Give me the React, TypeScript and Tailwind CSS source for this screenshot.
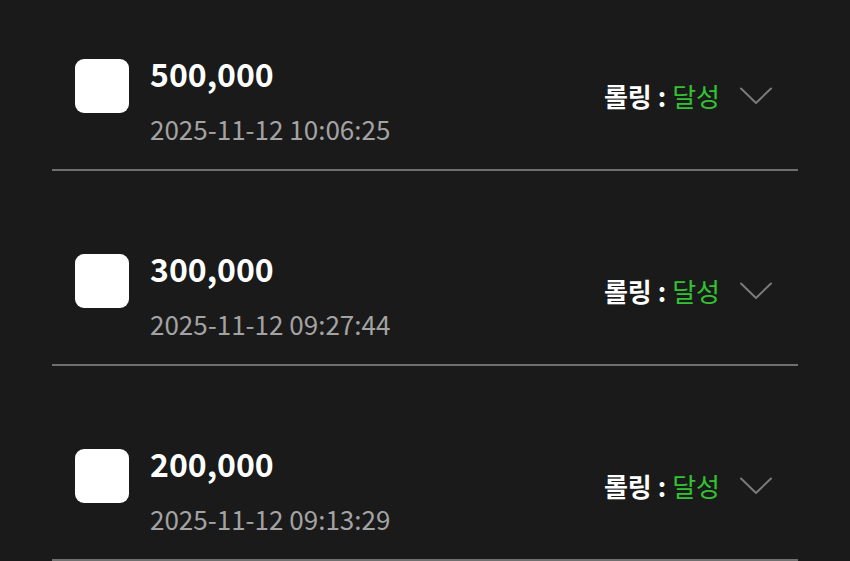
import React from "react";

const items = [
    { amount: "500,000", date: "2025-11-12 10:06:25" },
    { amount: "300,000", date: "2025-11-12 09:27:44" },
    { amount: "200,000", date: "2025-11-12 09:13:29" },
];

function Chevron() {
    return (
        <svg width="32" height="18" viewBox="0 0 32 18" fill="none">
            <path
                d="M1 1.5 L16 16 L31 1.5"
                stroke="#7a7a7a"
                strokeWidth="2"
                strokeLinecap="round"
                strokeLinejoin="round"
            />
        </svg>
    );
}

export default function App() {
    return (
        <div
            className="w-[850px] h-[561px] overflow-hidden bg-[#1a1a1a] px-[52px]"
            style={{ fontFamily: '"Noto Sans CJK KR", "Noto Sans", sans-serif' }}
        >
            <div className="mt-[-24px]">
                {items.map((item) => (
                    <div
                        key={item.date}
                        className="h-[195px] flex items-start pt-[83px] pl-[23px] pr-[26px] border-b-2 border-[#6f6f6f] box-border"
                    >
                        <div className="w-[54px] h-[54px] rounded-[9px] bg-white shrink-0" />
                        <div className="ml-[21px] flex flex-col">
                            <span className="text-[32px] leading-[28px] font-bold text-white">
                                {item.amount}
                            </span>
                            <span className="mt-[27px] text-[26px] leading-[30px] text-[#a3a3a3]">
                                {item.date}
                            </span>
                        </div>
                        <div className="ml-auto mt-[22px] flex items-center">
                            <span className="text-[26px] leading-[30px] font-bold text-white">
                                롤링 :
                            </span>
                            <span className="ml-[6px] text-[26px] leading-[30px] text-[#33c233]">
                                달성
                            </span>
                            <span className="ml-[20px] flex items-center">
                                <Chevron />
                            </span>
                        </div>
                    </div>
                ))}
            </div>
        </div>
    );
}
